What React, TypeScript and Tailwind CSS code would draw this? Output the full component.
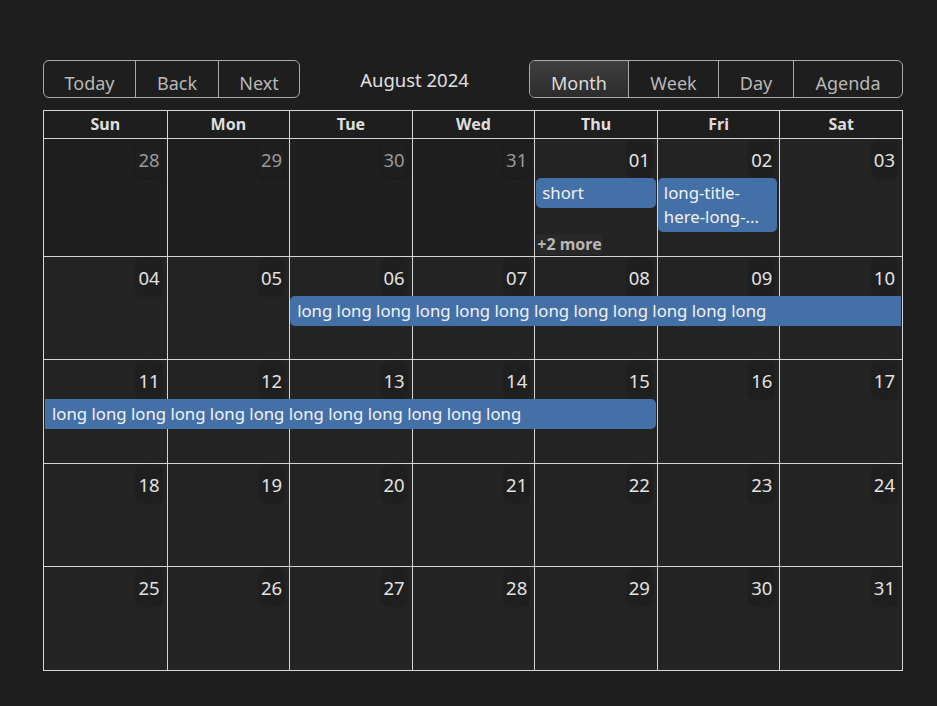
import React from "react";

type Day = { n: string; off?: boolean };

const weeks: Day[][] = [
  [
    { n: "28", off: true },
    { n: "29", off: true },
    { n: "30", off: true },
    { n: "31", off: true },
    { n: "01" },
    { n: "02" },
    { n: "03" },
  ],
  ["04", "05", "06", "07", "08", "09", "10"].map((n) => ({ n })),
  ["11", "12", "13", "14", "15", "16", "17"].map((n) => ({ n })),
  ["18", "19", "20", "21", "22", "23", "24"].map((n) => ({ n })),
  ["25", "26", "27", "28", "29", "30", "31"].map((n) => ({ n })),
];

const LONG = "long long long long long long long long long long long long";

function Bg({ days }: { days: Day[] }) {
  return (
    <div className="absolute inset-0 grid grid-cols-7">
      {days.map((d, i) => (
        <div
          key={i}
          className={
            (i > 0 ? "border-l border-[#d6d6d6] " : "") +
            (d.off ? "bg-[#1f1f1f]" : "bg-[#242424]")
          }
        />
      ))}
    </div>
  );
}

function DateHeader({ days }: { days: Day[] }) {
  return (
    <div className="grid grid-cols-7 h-[39px]">
      {days.map((d, i) => (
        <div key={i} className="flex justify-end pr-[5px]">
          <span
            className={
              "mt-[1px] h-[37px] px-[2px] pt-[7px] pb-[5px] rounded-md bg-[#1f1f1f] shadow-[0_1px_3px_rgba(0,0,0,0.25)] text-[18.5px] leading-[25px] " +
              (d.off ? "text-[#9a9a9a]" : "text-[#e2e2e2]")
            }
          >
            {d.n}
          </span>
        </div>
      ))}
    </div>
  );
}

function Week({
  days,
  tall,
  children,
}: {
  days: Day[];
  tall?: boolean;
  children?: React.ReactNode;
}) {
  return (
    <div
      className={
        "relative border-t border-[#d6d6d6] " + (tall ? "min-h-[104px]" : "min-h-[103px]")
      }
    >
      <Bg days={days} />
      <div className="relative">
        <DateHeader days={days} />
        {children}
      </div>
    </div>
  );
}

const evt =
  "bg-[#4470a8] text-[#f2f2f2] text-[16.75px] leading-[24px] py-[3px] px-[6px] whitespace-nowrap overflow-hidden";

export default function App() {
  return (
    <div className="min-h-screen bg-[#1e1e1e] pt-[60px] pl-[43px] font-['Noto_Sans',sans-serif]">
      <div className="w-[860px]">
        {/* toolbar */}
        <div className="flex items-start h-[38px]">
          <div className="flex h-[38px] border border-[#a9a9a9] rounded-[6px] overflow-hidden text-[18px] leading-[25px] text-[#b8b8b8]">
            <div className="w-[91px] pt-[10px] text-center">Today</div>
            <div className="w-[83px] pt-[10px] text-center border-l border-[#a9a9a9]">Back</div>
            <div className="w-[81px] pt-[10px] text-center border-l border-[#a9a9a9]">Next</div>
          </div>
          <div className="flex-1 text-center text-[18.5px] leading-[25px] pt-[7px] text-[#e0e0e0]">
            August 2024
          </div>
          <div className="flex h-[38px] border border-[#a9a9a9] rounded-[6px] overflow-hidden text-[18px] leading-[25px] text-[#b8b8b8]">
            <div className="w-[98px] pt-[10px] text-center bg-gradient-to-b from-[#3f3f3f] to-[#2c2c2c] text-[#dcdcdc]">
              Month
            </div>
            <div className="w-[90px] pt-[10px] text-center border-l border-[#a9a9a9]">Week</div>
            <div className="w-[75px] pt-[10px] text-center border-l border-[#a9a9a9]">Day</div>
            <div className="w-[109px] pt-[10px] text-center border-l border-[#a9a9a9]">Agenda</div>
          </div>
        </div>

        {/* month grid */}
        <div className="mt-[12px] border border-[#d6d6d6]">
          <div className="grid grid-cols-7 h-[27px] bg-[#1e1e1e]">
            {["Sun", "Mon", "Tue", "Wed", "Thu", "Fri", "Sat"].map((d, i) => (
              <div
                key={d}
                className={
                  "text-center font-bold text-[16px] leading-[26px] text-[#dedede] " +
                  (i > 0 ? "border-l border-[#d6d6d6]" : "")
                }
              >
                {d}
              </div>
            ))}
          </div>

          <Week days={weeks[0]}>
            <div className="grid grid-cols-7 items-start">
              <div className={"col-start-5 ml-[2px] mr-[1px] rounded-[5px] " + evt}>short</div>
              <div className={"col-start-6 ml-[1px] mr-[2px] rounded-[5px] " + evt}>
                <div>long-title-</div>
                <div>here-long-...</div>
              </div>
            </div>
            <div className="grid grid-cols-7 mt-[2px] pb-[1px]">
              <div className="col-start-5 ml-[2px] justify-self-start rounded-[4px] bg-[#292929] shadow-[0_1px_2px_rgba(0,0,0,0.3)] px-[1px] text-[16px] leading-[21px] font-bold text-[#b8b8b8]">
                +2 more
              </div>
            </div>
          </Week>

          <Week days={weeks[1]}>
            <div className="grid grid-cols-7">
              <div className={"col-start-3 col-span-5 ml-[1px] mr-[1px] rounded-l-[5px] pl-[7px] " + evt}>
                {LONG}
              </div>
            </div>
          </Week>

          <Week days={weeks[2]} tall>
            <div className="grid grid-cols-7">
              <div className={"col-start-1 col-span-5 ml-[1px] mr-[1px] rounded-r-[5px] pl-[7px] " + evt}>
                {LONG}
              </div>
            </div>
          </Week>

          <Week days={weeks[3]} />
          <Week days={weeks[4]} tall />
        </div>
      </div>
    </div>
  );
}
